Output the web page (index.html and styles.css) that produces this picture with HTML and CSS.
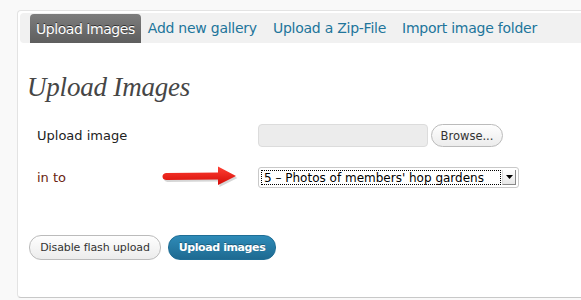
FILE: index.html
```html
<!DOCTYPE html>
<html>
<head>
<meta charset="utf-8">
<link rel="stylesheet" href="styles.css">
</head>
<body>
<div class="panel">
  <div class="tabs">
    <span class="tab active">Upload Images</span>
    <span class="tab">Add new gallery</span>
    <span class="tab">Upload a Zip-File</span>
    <span class="tab">Import image folder</span>
  </div>
  <h2 class="title">Upload Images</h2>
  <div class="form">
    <div class="row">
      <div class="label">Upload image</div>
      <div class="field">
        <div class="file-input"></div>
        <div class="btn browse">Browse...</div>
      </div>
    </div>
    <div class="row row-into">
      <div class="label into">in to</div>
      <div class="field">
        <div class="select">
          <div class="select-text">5 – Photos of members' hop gardens</div>
          <div class="select-arrow"><svg width="9" height="6" viewBox="0 0 9 6"><path d="M1 1h7L4.5 5z" fill="#000"/></svg></div>
        </div>
      </div>
      <svg class="arrow" width="80" height="24" viewBox="0 0 80 24">
        <defs>
          <linearGradient id="rg" x1="0" y1="0" x2="0" y2="1">
            <stop offset="0" stop-color="#ff4034"/>
            <stop offset="1" stop-color="#d40c07"/>
          </linearGradient>
        </defs>
        <path d="M5 8 L57 7.5 L57 1.5 L75 11 L57 20 L57 14.5 L5 15 Q1.5 14.5 1.5 11.5 Q1.5 8.5 5 8 Z" fill="#000" opacity="0.16" transform="translate(1.5,2)"/>
        <path d="M5 8 L57 7.5 L57 1.5 L75 11 L57 20 L57 14.5 L5 15 Q1.5 14.5 1.5 11.5 Q1.5 8.5 5 8 Z" fill="url(#rg)"/>
      </svg>
    </div>
  </div>
  <div class="actions">
    <div class="btn">Disable flash upload</div>
    <div class="btn primary">Upload images</div>
  </div>
</div>
</body>
</html>
```
FILE: styles.css
```css
html, body {
  margin: 0;
  padding: 0;
  background: #f9f9f9;
  overflow: hidden;
  width: 581px;
  height: 300px;
}
body {
  font-family: "DejaVu Sans", sans-serif;
}
.panel {
  margin: 10px 0 0 17px;
  width: 564px;
  height: 288px;
  background: #fff;
  border: 1px solid #e3e3e3;
  border-right: none;
  border-bottom-color: #c8c8c8;
  border-radius: 4px 0 0 4px;
  padding: 2px 0 0 2px;
  box-sizing: border-box;
}
.tabs {
  display: flex;
  align-items: stretch;
  background: #f1f1f1;
  border-radius: 4px 0 0 4px;
  height: 30px;
  padding-left: 10px;
}
.tab {
  display: flex;
  align-items: center;
  padding: 0 6px;
  font-size: 14px;
  color: #21759b;
  letter-spacing: -0.25px;
}
.tab + .tab {
  margin-left: 4px;
}
.tab.active + .tab {
  margin-left: 1px;
}
.tab.active {
  margin-top: 1px;
  background: linear-gradient(#7d7d7d, #5e5e5e);
  color: #fff;
  border-radius: 4px 4px 0 0;
  padding: 0 6px 0 6px;
  letter-spacing: -0.45px;
  text-shadow: 0 -1px 0 #333;
}
.title {
  margin: 27px 0 0 7px;
  font-family: "Liberation Serif", serif;
  font-style: italic;
  font-weight: normal;
  font-size: 27px;
  color: #464646;
  line-height: 34px;
  text-shadow: 0 1px 0 #fff;
  letter-spacing: -0.2px;
}
.form {
  margin-top: 20px;
  padding-left: 17px;
}
.row {
  display: flex;
  align-items: center;
  height: 23px;
  position: relative;
}
.row-into {
  margin-top: 20px;
  height: 21px;
}
.label {
  width: 221px;
  font-size: 13px;
  color: #222;
}
.label.into {
  color: #6a2410;
}
.field {
  display: flex;
  align-items: center;
  gap: 3px;
}
.file-input {
  width: 168px;
  height: 21px;
  background: #ececec;
  border: 1px solid #dcdcdc;
  border-radius: 4px;
}
.btn {
  display: flex;
  align-items: center;
  justify-content: center;
  height: 22px;
  box-sizing: border-box;
  border: 1px solid #bbb;
  border-radius: 12px;
  background: linear-gradient(#fefefe, #ececec);
  font-size: 11.5px;
  color: #333;
  padding: 0 10px;
}
.browse {
  width: 72px;
  height: 23px;
  padding: 0;
}
.select {
  width: 261px;
  height: 21px;
  box-sizing: border-box;
  border: 1px solid #c9c9c9;
  border-radius: 3px;
  background: #fff;
  display: flex;
  align-items: stretch;
  padding: 2px;
}
.select-text {
  flex: 1;
  border: 1px dotted #000;
  font-size: 12px;
  color: #000;
  display: flex;
  align-items: center;
  padding-left: 2px;
  line-height: 1;
}
.select-arrow {
  width: 12px;
  margin-left: 1px;
  background: linear-gradient(#fff, #e8e8e8);
  border-left: 1px solid #ddd;
  border-right: 1px solid #888;
  border-bottom: 1px solid #888;
  display: flex;
  align-items: center;
  justify-content: center;
}
.arrow {
  position: absolute;
  left: 124px;
  top: -2px;
}
.actions {
  display: flex;
  gap: 7px;
  margin: 47px 0 0 9px;
}
.actions .btn {
  width: 132px;
  height: 25px;
  font-size: 11px;
  padding: 0;
  letter-spacing: -0.1px;
}
.actions .primary {
  width: 108px;
  background: linear-gradient(#2e8bb8, #1e6a91);
  border-color: #1f6e96;
  color: #fff;
  font-weight: bold;
  letter-spacing: -0.4px;
  text-shadow: 0 -1px 0 rgba(0,0,0,0.3);
}
```
